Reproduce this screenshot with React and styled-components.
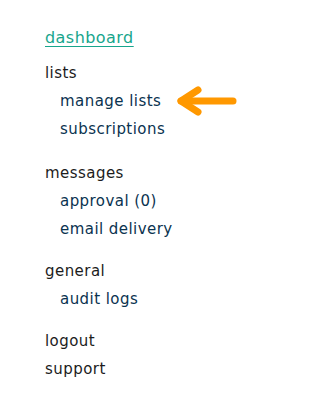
import React from 'react';
import styled, { createGlobalStyle } from 'styled-components';

const GlobalStyle = createGlobalStyle`
  html, body {
    margin: 0;
    padding: 0;
    background: #ffffff;
  }
  body {
    font-family: "DejaVu Sans", "Noto Sans", sans-serif;
  }
`;

const menu = [
  { title: 'lists', items: ['manage lists', 'subscriptions'] },
  { title: 'messages', items: ['approval (0)', 'email delivery'] },
  { title: 'general', items: ['audit logs'] },
];

const Sidebar = styled.nav`
  width: 250px;
  height: 410px;
  box-sizing: border-box;
  padding: 24px 0 0 45px;
  font-size: 15px;
  letter-spacing: 0.45px;
`;

const DashLink = styled.a`
  display: block;
  line-height: 28px;
  font-size: 16px;
  color: #17a58c;
  text-decoration: underline;
  text-underline-offset: 3px;
  margin-bottom: 7px;
`;

const Group = styled.div`
  margin-bottom: ${(p) => p.$gap}px;
`;

const Heading = styled.div`
  line-height: 28px;
  color: #1c1c1c;
`;

const Item = styled.div`
  position: relative;
  line-height: 28px;
  padding-left: 15px;
  color: #0b3350;
`;

const Arrow = styled.svg`
  position: absolute;
  left: 129px;
  top: -2px;
`;

function PointerArrow() {
  return (
    <Arrow width="64" height="32" viewBox="0 0 64 32">
      <g fill="none" stroke="#ff9800" strokeWidth="7" strokeLinecap="round" strokeLinejoin="round">
        <path d="M7 16 H59" />
        <path d="M24 5 L7 16 L24 27" />
      </g>
    </Arrow>
  );
}

export default function App() {
  return (
    <>
      <GlobalStyle />
      <Sidebar>
        <DashLink href="#">dashboard</DashLink>
        {menu.map((group, i) => (
          <Group key={group.title} $gap={i === 0 ? 16 : 14}>
            <Heading>{group.title}</Heading>
            {group.items.map((item) => (
              <Item key={item}>
                {item}
                {item === 'manage lists' && <PointerArrow />}
              </Item>
            ))}
          </Group>
        ))}
        <Heading>logout</Heading>
        <Heading>support</Heading>
      </Sidebar>
    </>
  );
}
